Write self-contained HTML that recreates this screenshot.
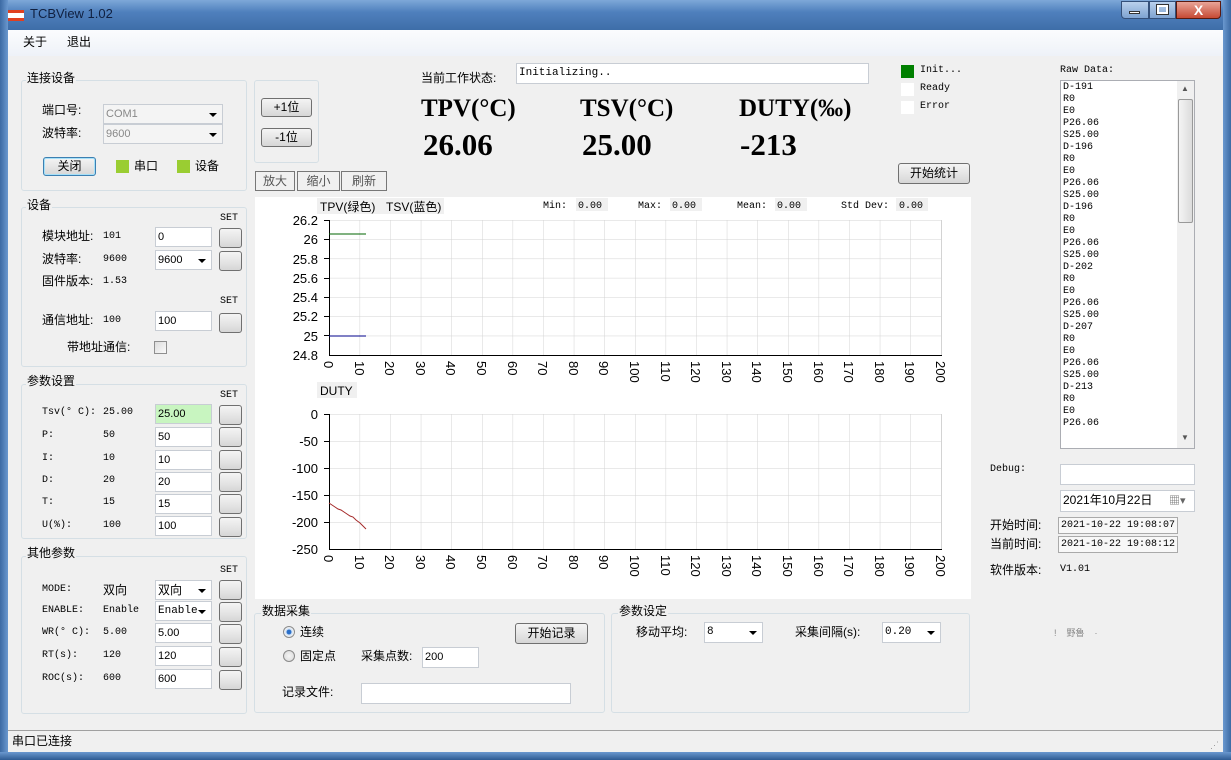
<!DOCTYPE html>
<html><head><meta charset="utf-8"><style>
*{margin:0;padding:0;box-sizing:border-box}
body{width:1231px;height:760px;position:relative;overflow:hidden;background:#f0f0f0;font-family:"Liberation Sans","Noto Sans CJK SC",sans-serif;font-size:12px;color:#000}
.a{position:absolute;white-space:nowrap}
.t{position:absolute;white-space:nowrap;line-height:14px}
.m{font-family:"Liberation Mono","Noto Sans CJK SC",monospace;font-size:10px}
.in{position:absolute;background:#fff;border:1px solid #c8cdd4;font-size:11px;padding:2px 2px;line-height:14px}
.btn{position:absolute;border:1px solid #707070;border-radius:3px;background:linear-gradient(#f4f4f4,#e6e6e6 50%,#d6d6d6);text-align:center;line-height:17px;font-size:12px}
.grp{position:absolute;border:1px solid #d5dfe5;border-radius:3px}
.lg{position:absolute;background:#f0f0f0;padding:0 1px;font-size:12px;line-height:14px}
.cb::after{content:"";position:absolute;right:5px;top:8px;border:4px solid transparent;border-top:4px solid #000;border-bottom:0}
.sq{position:absolute;width:13px;height:13px}
</style></head><body>
<div class="a" style="left:0;top:0;width:1231px;height:30px;background:linear-gradient(#7ea8d8,#4f80bd 40%,#3e6ea8)"></div>
<div class="a" style="left:0;top:0;width:8px;height:760px;background:linear-gradient(90deg,#3c6aa3,#6a98cf)"></div>
<div class="a" style="left:1223px;top:0;width:8px;height:760px;background:linear-gradient(90deg,#6a98cf,#3c6aa3)"></div>
<div class="a" style="left:0;top:752px;width:1231px;height:8px;background:linear-gradient(#6a98cf,#2e5b92)"></div>
<div class="a" style="left:8px;top:10px;width:16px;height:11px;background:#fff;border-top:3px solid #e04020;border-bottom:3px solid #e04020"></div>
<div class="t" style="left:30px;top:7px;font-size:13px;color:#102040">TCBView 1.02</div>
<div class="a" style="left:1121px;top:1px;width:28px;height:18px;border:1px solid #34507a;border-radius:0 0 0 4px;background:linear-gradient(#b9d0ec,#7ea3d1)"></div>
<div class="a" style="left:1129px;top:11px;width:11px;height:3px;background:#fff;border:1px solid #333"></div>
<div class="a" style="left:1149px;top:1px;width:27px;height:18px;border:1px solid #34507a;background:linear-gradient(#b9d0ec,#7ea3d1)"></div>
<div class="a" style="left:1157px;top:5px;width:11px;height:9px;border:2px solid #fff;outline:1px solid #333"></div>
<div class="a" style="left:1176px;top:1px;width:45px;height:18px;border:1px solid #5a1a10;border-radius:0 0 4px 0;background:linear-gradient(#e8a598,#c74a34);color:#fff;font-weight:bold;text-align:center;font-size:14px;line-height:16px">X</div>
<div class="a" style="left:8px;top:30px;width:1215px;height:26px;background:linear-gradient(#fbfcfe,#eef2f8)"></div>
<div class="t" style="left:23px;top:35px">关于</div>
<div class="t" style="left:67px;top:35px">退出</div>

<div class="grp" style="left:21px;top:80px;width:226px;height:111px"></div>
<div class="lg" style="left:26px;top:71px">连接设备</div>
<div class="t" style="left:42px;top:103px">端口号:</div>
<div class="in cb" style="left:103px;top:104px;width:120px;height:20px;background:#f4f4f4;color:#888">COM1</div>
<div class="t" style="left:42px;top:126px">波特率:</div>
<div class="in cb" style="left:103px;top:124px;width:120px;height:20px;background:#f4f4f4;color:#888">9600</div>
<div class="btn" style="left:43px;top:157px;width:53px;height:19px;border-color:#3c7fb1;box-shadow:inset 0 0 0 1px #a6e0f8">关闭</div>
<div class="sq" style="left:116px;top:160px;background:#9acd32"></div><div class="t" style="left:134px;top:159px">串口</div>
<div class="sq" style="left:177px;top:160px;background:#9acd32"></div><div class="t" style="left:195px;top:159px">设备</div>

<div class="grp" style="left:21px;top:207px;width:226px;height:160px"></div>
<div class="lg" style="left:26px;top:198px">设备</div>
<div class="t m" style="left:220px;top:212px">SET</div>
<div class="t" style="left:42px;top:229px">模块地址:</div><div class="t m" style="left:103px;top:230px">101</div>
<div class="in" style="left:155px;top:227px;width:57px;height:20px">0</div><div class="btn" style="left:219px;top:228px;width:23px;height:20px"></div>
<div class="t" style="left:42px;top:252px">波特率:</div><div class="t m" style="left:103px;top:253px">9600</div>
<div class="in cb" style="left:155px;top:250px;width:57px;height:20px">9600</div><div class="btn" style="left:219px;top:251px;width:23px;height:20px"></div>
<div class="t" style="left:42px;top:274px">固件版本:</div><div class="t m" style="left:103px;top:275px">1.53</div>
<div class="t m" style="left:220px;top:295px">SET</div>
<div class="t" style="left:42px;top:313px">通信地址:</div><div class="t m" style="left:103px;top:314px">100</div>
<div class="in" style="left:155px;top:311px;width:57px;height:20px">100</div><div class="btn" style="left:219px;top:313px;width:23px;height:20px"></div>
<div class="t" style="left:67px;top:340px">带地址通信:</div>
<div class="a" style="left:154px;top:341px;width:13px;height:13px;border:1px solid #8f8f8f;background:linear-gradient(135deg,#dcdcdc,#fafafa)"></div>

<div class="grp" style="left:21px;top:384px;width:226px;height:155px"></div>
<div class="lg" style="left:26px;top:374px">参数设置</div>
<div class="t m" style="left:220px;top:389px">SET</div>
<div class="t m" style="left:42px;top:406px">Tsv(° C):</div><div class="t m" style="left:103px;top:406px">25.00</div>
<div class="in" style="left:155px;top:404px;width:57px;height:20px;background:#c8f5c0">25.00</div><div class="btn" style="left:219px;top:405px;width:23px;height:20px"></div>
<div class="t m" style="left:42px;top:429px">P:</div><div class="t m" style="left:103px;top:429px">50</div>
<div class="in" style="left:155px;top:427px;width:57px;height:20px">50</div><div class="btn" style="left:219px;top:427px;width:23px;height:20px"></div>
<div class="t m" style="left:42px;top:452px">I:</div><div class="t m" style="left:103px;top:452px">10</div>
<div class="in" style="left:155px;top:450px;width:57px;height:20px">10</div><div class="btn" style="left:219px;top:450px;width:23px;height:20px"></div>
<div class="t m" style="left:42px;top:474px">D:</div><div class="t m" style="left:103px;top:474px">20</div>
<div class="in" style="left:155px;top:472px;width:57px;height:20px">20</div><div class="btn" style="left:219px;top:472px;width:23px;height:20px"></div>
<div class="t m" style="left:42px;top:496px">T:</div><div class="t m" style="left:103px;top:496px">15</div>
<div class="in" style="left:155px;top:494px;width:57px;height:20px">15</div><div class="btn" style="left:219px;top:494px;width:23px;height:20px"></div>
<div class="t m" style="left:42px;top:519px">U(%):</div><div class="t m" style="left:103px;top:519px">100</div>
<div class="in" style="left:155px;top:516px;width:57px;height:20px">100</div><div class="btn" style="left:219px;top:517px;width:23px;height:20px"></div>

<div class="grp" style="left:21px;top:556px;width:226px;height:158px"></div>
<div class="lg" style="left:26px;top:546px">其他参数</div>
<div class="t m" style="left:220px;top:564px">SET</div>
<div class="t m" style="left:42px;top:583px">MODE:</div><div class="t" style="left:103px;top:583px">双向</div>
<div class="in cb" style="left:155px;top:580px;width:57px;height:20px;font-size:12px">双向</div><div class="btn" style="left:219px;top:580px;width:23px;height:20px"></div>
<div class="t m" style="left:42px;top:604px">ENABLE:</div><div class="t m" style="left:103px;top:604px">Enable</div>
<div class="in cb m" style="left:155px;top:601px;width:57px;height:20px">Enable</div><div class="btn" style="left:219px;top:602px;width:23px;height:20px"></div>
<div class="t m" style="left:42px;top:626px">WR(° C):</div><div class="t m" style="left:103px;top:626px">5.00</div>
<div class="in" style="left:155px;top:623px;width:57px;height:20px">5.00</div><div class="btn" style="left:219px;top:624px;width:23px;height:20px"></div>
<div class="t m" style="left:42px;top:649px">RT(s):</div><div class="t m" style="left:103px;top:649px">120</div>
<div class="in" style="left:155px;top:646px;width:57px;height:20px">120</div><div class="btn" style="left:219px;top:647px;width:23px;height:20px"></div>
<div class="t m" style="left:42px;top:672px">ROC(s):</div><div class="t m" style="left:103px;top:672px">600</div>
<div class="in" style="left:155px;top:669px;width:57px;height:20px">600</div><div class="btn" style="left:219px;top:670px;width:23px;height:20px"></div>

<div class="grp" style="left:254px;top:80px;width:65px;height:83px"></div>
<div class="btn" style="left:261px;top:98px;width:51px;height:19px">+1位</div>
<div class="btn" style="left:261px;top:128px;width:51px;height:19px">-1位</div>
<div class="a" style="left:255px;top:171px;width:40px;height:20px;border:1px solid #777;text-align:center;line-height:18px;color:#555">放大</div>
<div class="a" style="left:297px;top:171px;width:43px;height:20px;border:1px solid #777;text-align:center;line-height:18px;color:#555">缩小</div>
<div class="a" style="left:341px;top:171px;width:46px;height:20px;border:1px solid #777;text-align:center;line-height:18px;color:#555">刷新</div>
<div class="t" style="left:421px;top:71px">当前工作状态:</div>
<div class="in m" style="left:516px;top:63px;width:353px;height:21px">Initializing..</div>
<div class="t" style="left:421px;top:94px;font:bold 25px/30px 'Liberation Serif',serif">TPV(°C)</div>
<div class="t" style="left:580px;top:94px;font:bold 25px/30px 'Liberation Serif',serif">TSV(°C)</div>
<div class="t" style="left:739px;top:94px;font:bold 25px/30px 'Liberation Serif',serif">DUTY(‰)</div>
<div class="t" style="left:423px;top:127px;font:bold 31px/36px 'Liberation Serif',serif">26.06</div>
<div class="t" style="left:582px;top:127px;font:bold 31px/36px 'Liberation Serif',serif">25.00</div>
<div class="t" style="left:740px;top:127px;font:bold 31px/36px 'Liberation Serif',serif">-213</div>
<div class="sq" style="left:901px;top:65px;background:#008000"></div><div class="t m" style="left:920px;top:64px">Init...</div>
<div class="sq" style="left:901px;top:83px;background:#fff"></div><div class="t m" style="left:920px;top:82px">Ready</div>
<div class="sq" style="left:901px;top:101px;background:#fff"></div><div class="t m" style="left:920px;top:100px">Error</div>
<div class="btn" style="left:898px;top:163px;width:72px;height:21px;line-height:19px">开始统计</div>

<div class="a" style="left:255px;top:197px;width:716px;height:402px;background:#fff"></div>
<svg class="a" style="left:0;top:0" width="1231" height="760" font-family="Liberation Sans,Arial,sans-serif">
<defs><pattern id="g1" x="329" y="220" width="30.6" height="19.286" patternUnits="userSpaceOnUse"><path d="M0 0V19.3M0 0H30.6" stroke="#d3d3d3" fill="none"/></pattern>
<pattern id="g2" x="329" y="414" width="30.6" height="27" patternUnits="userSpaceOnUse"><path d="M0 0V27M0 0H30.6" stroke="#d3d3d3" fill="none"/></pattern></defs>
<rect x="317" y="198" width="127" height="16" fill="#f0f0f0"/>
<text x="320" y="211" font-size="12">TPV(绿色)</text><text x="386" y="211" font-size="12">TSV(蓝色)</text>
<g font-family="Liberation Mono,monospace" font-size="10"><rect x="576" y="198" width="32" height="13" fill="#f0f0f0"/><rect x="670" y="198" width="32" height="13" fill="#f0f0f0"/><rect x="775" y="198" width="32" height="13" fill="#f0f0f0"/><rect x="896" y="198" width="32" height="13" fill="#f0f0f0"/>
<text x="543" y="208">Min:</text><text x="578" y="208">0.00</text><text x="638" y="208">Max:</text><text x="672" y="208">0.00</text><text x="737" y="208">Mean:</text><text x="777" y="208">0.00</text><text x="841" y="208">Std Dev:</text><text x="899" y="208">0.00</text></g>
<rect x="329" y="220" width="612" height="135" fill="url(#g1)"/>
<line x1="941.5" y1="220" x2="941.5" y2="355" stroke="#d3d3d3"/>
<path d="M329.5 220V355.5H942" stroke="#000" fill="none"/>
<g font-size="13" text-anchor="end"><text x="318" y="225">26.2</text><text x="318" y="244">26</text><text x="318" y="264">25.8</text><text x="318" y="283">25.6</text><text x="318" y="302">25.4</text><text x="318" y="321">25.2</text><text x="318" y="341">25</text><text x="318" y="360">24.8</text></g>
<g stroke="#000"><line x1="324" x2="329" y1="220.5" y2="220.5"/><line x1="324" x2="329" y1="239.5" y2="239.5"/><line x1="324" x2="329" y1="258.5" y2="258.5"/><line x1="324" x2="329" y1="278.5" y2="278.5"/><line x1="324" x2="329" y1="297.5" y2="297.5"/><line x1="324" x2="329" y1="316.5" y2="316.5"/><line x1="324" x2="329" y1="335.5" y2="335.5"/></g>
<line x1="329" y1="234" x2="366" y2="234" stroke="#006400"/>
<line x1="329" y1="336" x2="366" y2="336" stroke="#00008b"/>
<g font-size="13" id="xl">
<text transform="translate(324,361) rotate(90)">0</text><text transform="translate(355,361) rotate(90)">10</text><text transform="translate(385,361) rotate(90)">20</text><text transform="translate(416,361) rotate(90)">30</text><text transform="translate(446,361) rotate(90)">40</text><text transform="translate(477,361) rotate(90)">50</text><text transform="translate(508,361) rotate(90)">60</text><text transform="translate(538,361) rotate(90)">70</text><text transform="translate(569,361) rotate(90)">80</text><text transform="translate(599,361) rotate(90)">90</text><text transform="translate(630,361) rotate(90)">100</text><text transform="translate(661,361) rotate(90)">110</text><text transform="translate(691,361) rotate(90)">120</text><text transform="translate(722,361) rotate(90)">130</text><text transform="translate(752,361) rotate(90)">140</text><text transform="translate(783,361) rotate(90)">150</text><text transform="translate(814,361) rotate(90)">160</text><text transform="translate(844,361) rotate(90)">170</text><text transform="translate(875,361) rotate(90)">180</text><text transform="translate(905,361) rotate(90)">190</text><text transform="translate(936,361) rotate(90)">200</text></g>
<rect x="317" y="382" width="40" height="16" fill="#f0f0f0"/><text x="320" y="395" font-size="12">DUTY</text>
<rect x="329" y="414" width="612" height="135" fill="url(#g2)"/>
<line x1="941.5" y1="414" x2="941.5" y2="549" stroke="#d3d3d3"/>
<path d="M329.5 414V549.5H942" stroke="#000" fill="none"/>
<g font-size="13" text-anchor="end"><text x="318" y="419">0</text><text x="318" y="446">-50</text><text x="318" y="473">-100</text><text x="318" y="500">-150</text><text x="318" y="527">-200</text><text x="318" y="554">-250</text></g>
<g stroke="#000"><line x1="324" x2="329" y1="414.5" y2="414.5"/><line x1="324" x2="329" y1="441.5" y2="441.5"/><line x1="324" x2="329" y1="468.5" y2="468.5"/><line x1="324" x2="329" y1="495.5" y2="495.5"/><line x1="324" x2="329" y1="522.5" y2="522.5"/></g>
<polyline points="329,503 335,507 338,509 341,510 344,512 347,514 350,516 353,517 356,520 360,523 363,526 366,529" stroke="#a52a2a" fill="none"/>
<use href="#xl" transform="translate(0,194)"/>
</svg>

<div class="grp" style="left:254px;top:613px;width:351px;height:100px"></div>
<div class="lg" style="left:261px;top:604px">数据采集</div>
<div class="a" style="left:283px;top:626px;width:12px;height:12px;border-radius:50%;border:1px solid #8a8a8a;background:radial-gradient(#2a6fc9 30%,#cfe0f3 40%,#f5f5f5 70%)"></div><div class="t" style="left:300px;top:625px">连续</div>
<div class="a" style="left:283px;top:650px;width:12px;height:12px;border-radius:50%;border:1px solid #8a8a8a;background:radial-gradient(#f5f5f5,#d8d8d8)"></div><div class="t" style="left:300px;top:649px">固定点</div>
<div class="t" style="left:361px;top:649px">采集点数:</div>
<div class="in" style="left:422px;top:647px;width:57px;height:21px">200</div>
<div class="btn" style="left:515px;top:623px;width:73px;height:21px;line-height:19px">开始记录</div>
<div class="t" style="left:282px;top:685px">记录文件:</div>
<div class="in" style="left:361px;top:683px;width:210px;height:21px"></div>
<div class="grp" style="left:611px;top:613px;width:359px;height:100px"></div>
<div class="lg" style="left:618px;top:604px">参数设定</div>
<div class="t" style="left:636px;top:625px">移动平均:</div>
<div class="in cb m" style="left:704px;top:622px;width:59px;height:21px">8</div>
<div class="t" style="left:795px;top:625px">采集间隔(s):</div>
<div class="in cb m" style="left:882px;top:622px;width:59px;height:21px">0.20</div>

<div class="t m" style="left:1060px;top:64px">Raw Data:</div>
<div class="a" style="left:1060px;top:80px;width:135px;height:369px;background:#fff;border:1px solid #abadb3"></div>
<div class="a m" style="left:1063px;top:82px;line-height:12px;white-space:pre;font-size:10px">D-191
R0
E0
P26.06
S25.00
D-196
R0
E0
P26.06
S25.00
D-196
R0
E0
P26.06
S25.00
D-202
R0
E0
P26.06
S25.00
D-207
R0
E0
P26.06
S25.00
D-213
R0
E0
P26.06</div>
<div class="a" style="left:1177px;top:81px;width:17px;height:367px;background:#f0f0f0"></div>
<div class="a" style="left:1178px;top:99px;width:15px;height:124px;border:1px solid #999;border-radius:2px;background:linear-gradient(90deg,#f4f4f4,#dcdcdc)"></div>
<div class="t" style="left:1181px;top:82px;font-size:8px;color:#555">▲</div>
<div class="t" style="left:1181px;top:431px;font-size:8px;color:#555">▼</div>
<div class="t m" style="left:990px;top:463px">Debug:</div>
<div class="in" style="left:1060px;top:464px;width:135px;height:21px"></div>
<div class="in" style="left:1060px;top:490px;width:135px;height:22px;font-size:12px">2021年10月22日</div>
<div class="t" style="left:1169px;top:494px;font-size:11px;color:#666">▦▾</div>
<div class="t" style="left:990px;top:518px">开始时间:</div>
<div class="a m" style="left:1058px;top:517px;width:120px;height:17px;border:1px solid #aaa;background:#f8f8f8;padding-left:2px;line-height:15px">2021-10-22 19:08:07</div>
<div class="t" style="left:990px;top:537px">当前时间:</div>
<div class="a m" style="left:1058px;top:536px;width:120px;height:17px;border:1px solid #aaa;background:#f8f8f8;padding-left:2px;line-height:15px">2021-10-22 19:08:12</div>
<div class="t" style="left:990px;top:563px">软件版本:</div>
<div class="t m" style="left:1060px;top:563px">V1.01</div>
<div class="t" style="left:1054px;top:626px;font-size:9px;color:#888">!&nbsp;&nbsp;&nbsp;&nbsp;野魯&nbsp;&nbsp;&nbsp;&nbsp;·</div>

<div class="a" style="left:8px;top:730px;width:1215px;height:1px;background:#a0a0a0"></div>
<div class="t" style="left:12px;top:734px">串口已连接</div>
<div class="t" style="left:1210px;top:738px;font-size:9px;color:#999">⋰</div>
</body></html>
